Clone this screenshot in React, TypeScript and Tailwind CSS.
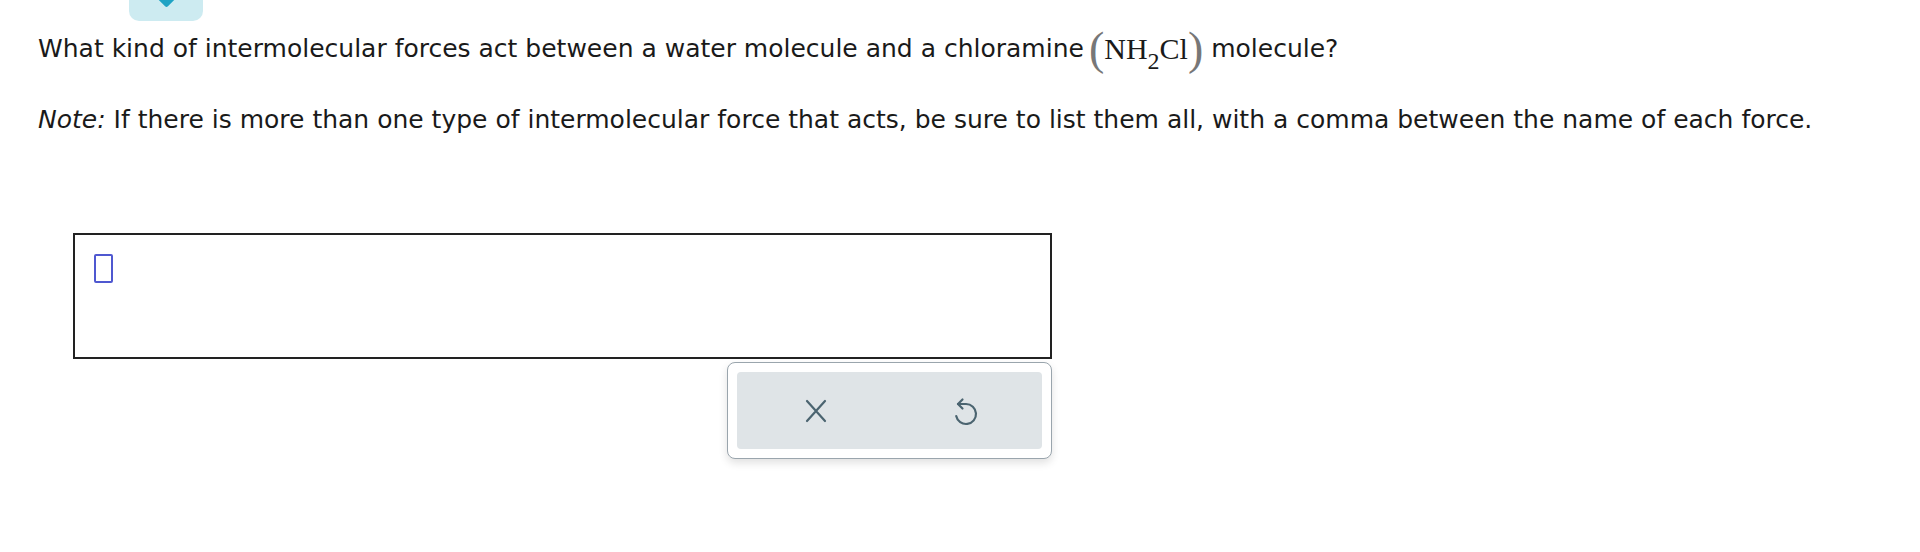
function UndoIcon() {
  return (
    <svg width="28" height="32" viewBox="0 0 28 32" fill="none" stroke="#4b6470" strokeWidth="2.2" strokeLinecap="round" strokeLinejoin="round">
      <path d="M6 9 H14 A10 10 0 1 1 4.2 21" />
      <path d="M10.5 4.5 L6 9 L10.5 13.5" />
    </svg>
  );
}

function CloseIcon() {
  return (
    <svg width="22" height="24" viewBox="0 0 22 24" fill="none" stroke="#4b6470" strokeWidth="2.2" strokeLinecap="round">
      <path d="M2 2 L20 22 M20 2 L2 22" />
    </svg>
  );
}

export default function App() {
  return (
    <div className="min-h-[552px] bg-white text-[#1a1a1a]" style={{ fontFamily: '"DejaVu Sans", Verdana, sans-serif' }}>
      <div className="flex pl-[129px]">
        <div className="flex h-[21px] w-[74px] justify-center rounded-b-[10px] bg-[#cdebf1]">
          <div className="-mt-[8px] h-[13px] w-[13px] rotate-45 rounded-[2px] bg-[#1fa3c4]" />
        </div>
      </div>
      <div className="pl-[38px] pt-[6px]">
        <p className="flex h-[44px] items-center text-[25px]">
          <span>What kind of intermolecular forces act between a water molecule and a chloramine</span>
          <span className="ml-[5px] flex h-[44px] items-center" style={{ fontFamily: '"Liberation Serif", "Times New Roman", serif' }}>
            <span className="text-[46px] leading-none text-[#777]">(</span>
            <span className="text-[30px] leading-none">NH</span>
            <span className="mt-[24px] text-[24px] leading-none">2</span>
            <span className="text-[30px] leading-none">Cl</span>
            <span className="text-[46px] leading-none text-[#777]">)</span>
          </span>
          <span>&nbsp;molecule?</span>
        </p>
        <p className="mt-[34px] text-[25px] leading-[30px]">
          <i>Note:</i> If there is more than one type of intermolecular force that acts, be sure to list them all, with a comma between the name of each force.
        </p>
      </div>
      <div className="ml-[73px] mt-[98px] w-[979px]">
        <div className="h-[126px] border-2 border-[#222] px-[19px] pt-[19px]">
          <div className="h-[29px] w-[19px] rounded-[2px] border-2 border-[#4f58d0]" />
        </div>
        <div className="flex justify-end">
          <div className="mt-[3px] w-[325px] rounded-[8px] border border-[#9aa5ad] bg-white p-[9px] shadow-[0_4px_8px_rgba(0,0,0,0.12)]">
            <div className="flex h-[77px] items-center justify-around rounded-[4px] bg-[#dfe4e7] pl-[6px]">
              <CloseIcon />
              <UndoIcon />
            </div>
          </div>
        </div>
      </div>
    </div>
  );
}
